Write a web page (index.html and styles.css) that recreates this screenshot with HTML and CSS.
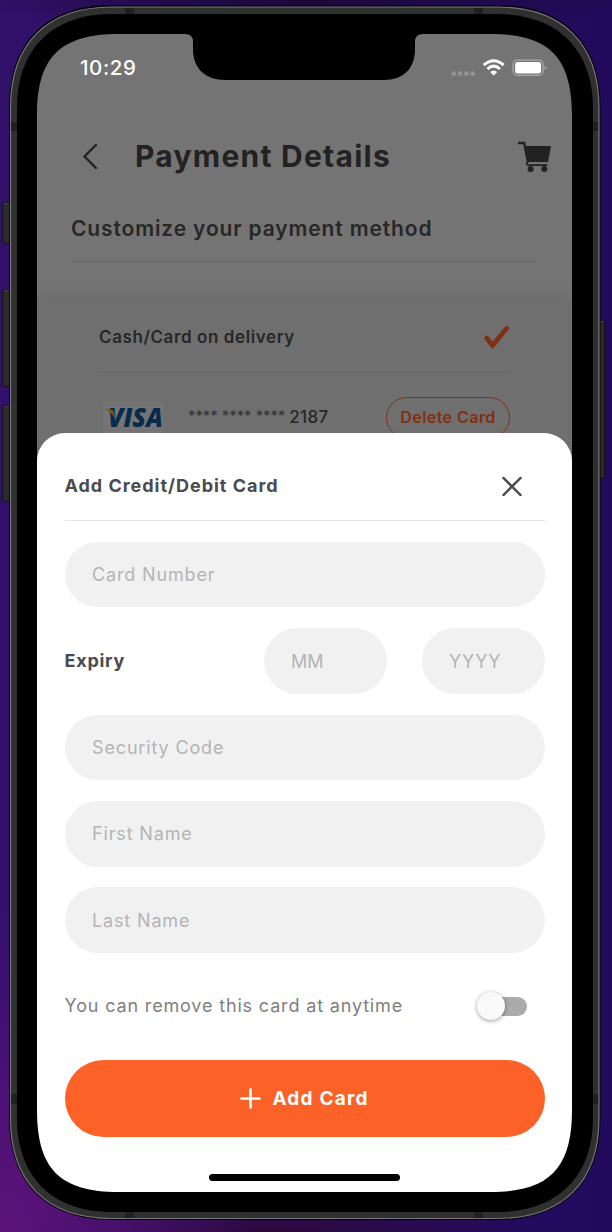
FILE: index.html
```html
<!DOCTYPE html>
<html lang="en">
<head>
<meta charset="utf-8">
<title>Payment Details</title>
<link rel="stylesheet" href="styles.css">
</head>
<body>
<div class="stage">
  <main class="screen">
    <section class="page">
      <div class="status">
        <span class="clock">10:29</span>
        <svg class="status-icons" width="96" height="20" viewBox="0 0 96 20">
          <g fill="#939393"><rect x=".6" y="13.3" width="4.4" height="4.4" rx="1.5"/><rect x="6.8" y="13.3" width="4.4" height="4.4" rx="1.5"/><rect x="13.2" y="13.3" width="4.4" height="4.4" rx="1.5"/><rect x="19.6" y="13.3" width="4.4" height="4.4" rx="1.5"/></g>
          <g fill="none" stroke="#fff" stroke-width="3"><path d="M32.7 7.2Q42.7-1.6 52.7 7.2"/><path d="M36.5 11Q42.7 5.2 48.9 11"/></g>
          <path d="M39.2 14Q42.7 11 46.2 14L42.7 17.6Z" fill="#fff"/>
          <rect x="62.1" y="2.2" width="30" height="15.2" rx="4.4" fill="none" stroke="#aaa" stroke-width="1.3"/>
          <rect x="64.1" y="4.1" width="26" height="11.5" rx="2.4" fill="#fff"/>
          <path d="M93.7 7.5Q95.4 8.2 95.4 9.8T93.7 12.1Z" fill="#aaa"/>
        </svg>
      </div>
      <header class="header">
        <svg class="back" width="16" height="26" viewBox="0 0 16 26"><path d="M13.9 2L2.5 13.5L13.9 25" fill="none" stroke="#222" stroke-width="2.4" stroke-linecap="round" stroke-linejoin="round"/></svg>
        <h1 class="title">Payment Details</h1>
        <svg class="cart" width="34" height="31" viewBox="0 0 34 31"><path d="M0 2H6.2L10 21.5" fill="none" stroke="#222" stroke-width="2.3"/><path d="M7 5H33L30 21H9.5Z" fill="#222"/><path d="M10.2 20.5Q8.4 21.4 8.6 23Q9 24.2 10.2 24.2H29.3" fill="none" stroke="#222" stroke-width="1.8"/><path d="M10.5 22.4H29.5" stroke="#747474" stroke-width="1"/><circle cx="12.6" cy="28" r="3" fill="#222"/><circle cx="26.3" cy="28" r="3" fill="#222"/></svg>
      </header>
      <h2 class="subtitle">Customize your payment method</h2>
      <div class="methods">
        <div class="method cash">
          <span class="cash-label">Cash/Card on delivery</span>
          <svg width="26" height="24" viewBox="0 0 26 24"><path d="M2.8 13L8.5 20.5L22.8 3.3" fill="none" stroke="#802f12" stroke-width="4.6" stroke-linecap="round"/></svg>
        </div>
        <div class="method card">
          <span class="visa"><svg width="60" height="32" viewBox="0 0 60 32"><text x="5" y="25.4" class="visa-text" textLength="55" lengthAdjust="spacingAndGlyphs">VISA</text><path d="M1 7.3H8Q10 7.5 10.6 10L11.8 16Q8 9.5 1 7.3Z" fill="#81520d"/></svg></span>
          <span class="stars">**** **** ****</span><span class="digits">2187</span>
          <span class="delete">Delete Card</span>
        </div>
      </div>
    </section>
    <section class="sheet">
      <div class="sheet-head">
        <h3 class="sheet-title">Add Credit/Debit Card</h3>
        <svg width="20" height="20" viewBox="0 0 20 20"><path d="M1.4 1.9L18.6 19.1M18.6 1.9L1.4 19.1" stroke="#4a4b4d" stroke-width="2.3" stroke-linecap="round"/></svg>
      </div>
      <div class="field"><span>Card Number</span></div>
      <div class="expiry">
        <span class="expiry-label">Expiry</span>
        <div class="field small"><span class="month">MM</span></div>
        <div class="field small"><span>YYYY</span></div>
      </div>
      <div class="field"><span>Security Code</span></div>
      <div class="field"><span>First Name</span></div>
      <div class="field"><span>Last Name</span></div>
      <div class="removal"><span class="removal-text">You can remove this card at anytime</span><span class="switch"><i class="knob"></i></span></div>
      <div class="add"><svg width="21" height="21" viewBox="0 0 21 21"><path d="M10.5 1.5V19.5M1.5 10.5H19.5" stroke="#fff" stroke-width="2.7" stroke-linecap="round"/></svg><span class="add-text">Add Card</span></div>
      <div class="home"></div>
    </section>
  </main>
  <svg class="frame" width="612" height="1232" viewBox="0 0 612 1232">
    <g fill="#2b2b2e" stroke="#111017" stroke-width="1">
      <rect x="2.5" y="202.5" width="10" height="41" rx="2"/><rect x="2.5" y="289.5" width="10" height="97" rx="2"/><rect x="2.5" y="405.5" width="10" height="96" rx="2"/><rect x="596" y="320.5" width="8.5" height="158" rx="2"/>
    </g>
    <g fill="#454549"><path d="M4 203h6v1H4zM4 290h6v1H4zM4 406h6v1H4zM600 321h4v1h-4z"/></g>
    <defs><mask id="opening" maskUnits="userSpaceOnUse" x="0" y="0" width="612" height="1232"><rect width="612" height="1232" fill="#fff"/>
      <path fill="#000" d="M37 116C37 57 60 34 119 34H185Q193 34 193 42V49C193 69 206 80 225 80H384C403 80 415 69 415 49V42Q415 34 423 34H490C549 34 572 57 572 116V1110C572 1169 549 1192 490 1192H119C60 1192 37 1169 37 1110Z"/></mask></defs>
    <g mask="url(#opening)">
      <path fill="#050308" d="M9 107C9 41 47 5 112 5H497C562 5 600.5 41 600.5 107V1118C600.5 1184 562 1220 497 1220H112C47 1220 9 1184 9 1118Z"/>
      <path fill="#303030" stroke="#777779" stroke-width="1.2" d="M10.5 108C10.5 43 47.5 7 112 7H497C562 7 599 43 599 108V1118C599 1183 562 1218.5 497 1218.5H112C47.5 1218.5 10.5 1183 10.5 1118Z"/>
      <path fill="#202020" d="M11 122h6v9h-6zM593 122h5v9h-5zM125 8h9v6h-9zM474 8h9v6h-9zM11 1094h6v10h-6zM593 1094h5v10h-5zM125 1212h9v6h-9zM474 1212h9v6h-9z"/>
      <path fill="#000" d="M17 108C17 49 52 14 112 14H497C557 14 593 49 593 108V1118C593 1177 557 1212 497 1212H112C52 1212 17 1177 17 1118Z"/>
    </g>
  </svg>
</div>
</body>
</html>
```
FILE: styles.css
```css
* { box-sizing: border-box; }
body { margin: 0; font-family: "Inter", "Liberation Sans", sans-serif; }
h1, h2, h3 { margin: 0; }
svg { display: block; flex: none; }
span { white-space: nowrap; }
.stage {
  position: relative;
  width: 612px;
  height: 1232px;
  padding: 34px 40px 40px 37px;
  overflow: hidden;
  background:
    radial-gradient(ellipse 250px 330px at 0 100%, #5d127a, transparent),
    radial-gradient(ellipse 350px 30px at 50% 0, #1b0838, transparent),
    radial-gradient(ellipse 260px 30px at 45% 100%, #2c093a, transparent),
    linear-gradient(90deg, #32116b, #210a5b);
}
.frame { position: absolute; left: 0; top: 0; }
.screen { width: 535px; height: 1158px; background: #747474; }
.page { height: 399px; display: flex; flex-direction: column; }
.status { height: 68px; flex: none; display: flex; justify-content: space-between; padding: 0 25px 0 43px; align-items: center; }
.clock { color: #fff; font-size: 20.5px; font-weight: 500; line-height: 24px; letter-spacing: 0.6px; }
.header { height: 108px; flex: none; display: flex; align-items: center; padding: 0 20px 0 45px; }
.title { margin-left: 37px; color: #222; font-size: 30px; font-weight: 700; line-height: 36px; letter-spacing: 1.25px; flex: 1; white-space: nowrap; }
.subtitle { height: 52px; flex: none; margin: 0 35px 0 34px; padding-top: 1px; border-bottom: 1px solid #686868; color: #272728; font-size: 21px; font-weight: 600; line-height: 36px; letter-spacing: 0.86px; white-space: nowrap; }
.methods { margin-top: 36px; flex: 1; padding: 0 62px; background: #6f6f6f; box-shadow: 0 -1px 12px #6f6f6f; }
.method { display: flex; align-items: center; }
.cash { height: 75px; padding-top: 3px; justify-content: space-between; border-bottom: 1px solid #646464; }
.cash-label { color: #272728; font-size: 17px; font-weight: 600; letter-spacing: 0.6px; }
.card { height: 91px; }
.visa { margin: -1px 0 0 4px; width: 60px; background: #747474; }
.visa-text { font: italic 800 26px "Open Sans", sans-serif; fill: #072b4d; }
.stars { margin: -6px 0 0 25px; color: #343435; font-size: 14.8px; }
.digits { margin: -3px 0 0 4px; color: #272728; font-size: 17px; font-weight: 500; letter-spacing: 0.3px; }
.delete { margin: -2px 0 0 auto; width: 124px; height: 41px; border: 1.5px solid #802f12; border-radius: 21px; color: #802f12; font-size: 16px; font-weight: 600; line-height: 39px; letter-spacing: 0.45px; text-align: center; }
.sheet { position: relative; height: 759px; padding: 0 27.5px; background: #fff; border-radius: 28px 28px 0 0; display: flex; flex-direction: column; }
.sheet-head { height: 88px; flex: none; display: flex; align-items: center; justify-content: space-between; padding: 19px 22.5px 0 0; border-bottom: 1px solid #e4e4e4; }
.sheet-title { color: #4a4b4d; font-size: 18px; font-weight: 700; line-height: 24px; letter-spacing: 0.98px; white-space: nowrap; }
.field { height: 65.5px; flex: none; margin-top: 20.9px; padding-left: 27.5px; display: flex; align-items: center; border-radius: 33px; background: #f1f1f1; color: #b4b4b5; font-size: 18px; letter-spacing: 0.85px; }
.expiry { height: 65.5px; flex: none; margin-top: 20.9px; display: grid; grid-template-columns: 199px 158px 123px; align-items: center; }
.expiry .field { margin: 0; }
.small { width: 123px; }
.month { letter-spacing: 0; }
.expiry-label { color: #4a4b4d; font-size: 18px; font-weight: 700; letter-spacing: 0.75px; margin-top: -1px; }
.removal { height: 107px; flex: none; display: flex; align-items: center; justify-content: space-between; padding-right: 17.5px; color: #7f7f80; font-size: 18px; letter-spacing: 0.84px; }
.removal-text { margin-top: -2px; }
.switch { width: 47px; height: 19px; border-radius: 10px; background: #ababab; display: flex; align-items: center; }
.knob { width: 28px; height: 28px; flex: none; margin-left: -3px; border-radius: 50%; background: #fafafa; box-shadow: 0 1px 4px #0006; }
.add { height: 77px; flex: none; border-radius: 39px; background: #fc6228; color: #fff; display: flex; align-items: center; justify-content: center; gap: 11px; font-size: 19px; font-weight: 700; letter-spacing: 1.2px; }
.home { width: 191px; height: 7px; flex: none; margin: 37px auto 0; border-radius: 4px; background: #000; }
```
